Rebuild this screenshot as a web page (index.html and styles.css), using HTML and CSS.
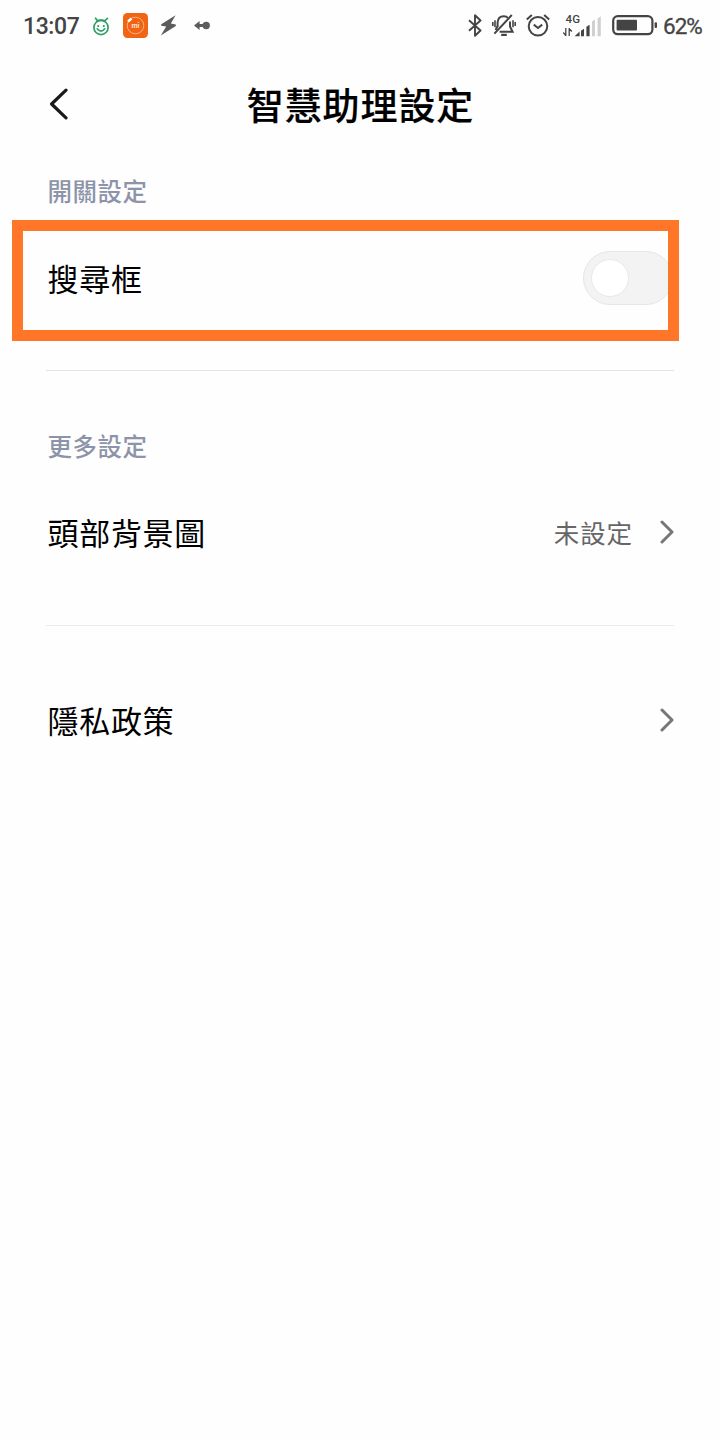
FILE: index.html
```html
<!DOCTYPE html>
<html lang="zh-Hant">
  <head>
  <meta charset="utf-8">
  <meta name="viewport" content="width=device-width, initial-scale=1">
  <title>智慧助理設定</title>
  <link rel="stylesheet" href="styles.css">
  </head>
  <body>
    <div class="status-bar">
      <div class="status-group">
        <span class="clock">13:07</span>
        <svg class="smiley" width="18" height="20" viewBox="0 0 18 20" fill="none" stroke="#2f9f68" stroke-width="1.7" stroke-linecap="round">
          <circle cx="9" cy="11.5" r="7.1"/>
          <path d="M5.4 5 3.6 2.2M12.6 5 15.4 2.4M5.2 12.8Q9 17.5 12.8 12.8M5 4.9Q9 3.2 13 4.9"/>
          <path d="M6.2 10v.1M11.8 10v.1" stroke-width="2.2"/>
        </svg>
        <svg class="mi" width="25" height="25" viewBox="0 0 25 25">
          <rect width="25" height="25" rx="4.5" fill="#f06414"/>
          <circle cx="12.5" cy="12.5" r="8.3" fill="none" stroke="#fbc6a0" stroke-width=".8"/>
          <path d="M5 8.5 8.5 5.5" stroke="#fff" stroke-width="2.4"/>
          <text x="12.5" y="14.6" text-anchor="middle" font-size="7" font-weight="bold" fill="#ffe7d6">mi</text>
        </svg>
        <svg class="bolt" width="17" height="21" viewBox="0 0 17 21" fill="#5c5c5c">
          <path d="M15.6.3 1.2 9.2v1.6l5 .8L.8 20.6 15.8 11V9.4l-5-.8z"/>
        </svg>
        <svg class="link" width="16" height="9" viewBox="0 0 16 9" fill="#5c5c5c">
          <path d="M0 4.5 5.6.1v3H10v2.8H5.6v3z"/>
          <circle cx="12.2" cy="4.5" r="3.7"/>
        </svg>
      </div>
      <div class="status-group">
        <svg class="bluetooth" width="14" height="23" viewBox="0 0 14 23" fill="none" stroke="#444" stroke-width="1.9" stroke-linejoin="round">
          <path d="M1 6.3 12.5 16.5 7 21.8V1.2l5.5 5.3L1 16.7"/>
        </svg>
        <svg class="bell" width="24" height="23" viewBox="0 0 24 23" fill="none" stroke="#444" stroke-width="2">
          <path d="M5.6 13V8.5Q6 2.2 11.8 2.2Q14.6 2.2 16 4M18 7.5V12.5L20.6 17.8H7.6M5.6 12 3.6 16"/>
          <path d="M2.4 19.6 19.8 1"/>
          <path d="M9.2 20.9h5.6" stroke-width="2.2"/>
          <path d="M3 6.3v7M.8 8v4M21 6.3v7M23.2 8v4" stroke-width="1.6"/>
        </svg>
        <svg class="alarm" width="24" height="23" viewBox="0 0 24 23" fill="none" stroke="#444" stroke-width="2">
          <circle cx="12" cy="12.3" r="9.3"/>
          <path d="M7.8 10.6 12 14 16.2 10.6M.8 5.6 5.8 1M23.2 5.6 18.2 1"/>
        </svg>
        <svg class="signal" width="39" height="30" viewBox="0 -3 39 30" fill="#444">
          <text x="2.6" y="9.3" font-size="11.5" font-weight="500">4G</text>
          <path d="M2.8 14v8M.2 18.5l2.6 3M6.2 22v-8M8.8 17.5l-2.6-3" fill="none" stroke="#444" stroke-width="1.3"/>
          <path d="M11.6 22.2 16.6 17.5v4.7zM18 22.2V16.7l3-1.9v7.4zM23.4 22.2V12.8l3.2-2v11.4z"/>
          <path d="M29 22.2V7.4l3-2v16.8zM34.6 22.2V4.4l3.2-2.2v20z" fill="#d0d0d0"/>
        </svg>
        <svg class="battery" width="46" height="21" viewBox="0 0 46 21">
          <rect x="1.2" y="1.2" width="39.2" height="18" rx="4.6" fill="none" stroke="#444" stroke-width="2.2"/>
          <rect x="4.6" y="4.8" width="20.4" height="10.8" rx="1" fill="#444"/>
          <rect x="42.6" y="7.3" width="2.4" height="5.6" rx="1" fill="#444"/>
        </svg>
        <span class="percent">62%</span>
      </div>
    </div>

    <header class="title-bar">
      <svg class="back" width="20" height="32" viewBox="0 0 20 32" fill="none" stroke="#1a1a1a" stroke-width="3.2" stroke-linecap="round" stroke-linejoin="round">
        <path d="M17 2.2 2.6 16 17 29.8"/>
      </svg>
      <h1>智慧助理設定</h1>
    </header>

    <main>
      <h2 class="section-label">開關設定</h2>
      <div class="highlight">
        <span class="name">搜尋框</span>
        <div class="toggle"><div class="knob"></div></div>
      </div>
      <hr class="switch-line">

      <h2 class="section-label more">更多設定</h2>
      <div class="row">
        <span class="name">頭部背景圖</span>
        <span class="value">未設定</span>
        <svg class="chevron" width="15" height="24" viewBox="0 0 15 24"><path d="M2 2 12 12 2 22"/></svg>
      </div>
      <hr class="more-line">

      <div class="row privacy">
        <span class="name">隱私政策</span>
        <svg class="chevron" width="15" height="24" viewBox="0 0 15 24"><path d="M2 2 12 12 2 22"/></svg>
      </div>
    </main>
  </body>
</html>
```

FILE: styles.css
```css
* {
  box-sizing: border-box;
}

body {
  margin: 0;
  min-height: 1440px;
  background: #fefefe;
  color: #000;
  font-family: "Noto Sans CJK TC", sans-serif;
}

svg {
  display: block;
  flex: none;
}

.status-bar {
  display: flex;
  justify-content: space-between;
  height: 51px;
  padding: 0 18px 0 23px;
  color: #444;
  font-family: Roboto, sans-serif;
}

.status-group {
  display: flex;
  align-items: center;
}

.clock {
  width: 69px;
  padding-top: 2px;
  font-size: 23px;
  font-weight: 500;
  letter-spacing: -0.4px;
}

.mi {
  margin-left: 13px;
}

.bolt {
  margin-left: 12px;
}

.link {
  margin-left: 17px;
}

.bell,
.alarm,
.battery {
  margin-left: 10px;
}

.signal {
  margin-left: 13px;
}

.percent {
  width: 39px;
  margin-left: 5px;
  font-size: 22.5px;
  font-weight: 400;
  letter-spacing: -1px;
  white-space: nowrap;
  -webkit-text-stroke: 0.3px #444;
}

.title-bar {
  display: grid;
  grid-template-columns: 48px 1fr 48px;
  align-items: center;
  height: 106px;
}

.title-bar h1 {
  margin: 0;
  padding-left: 1px;
  font-size: 37px;
  font-weight: 500;
  letter-spacing: 0.9px;
  line-height: 54px;
  text-align: center;
  -webkit-text-stroke: 0.2px #000;
}

.back {
  justify-self: end;
  margin-right: -21px;
}

.section-label {
  height: 63px;
  margin: 0 47.5px;
  color: #8d94a9;
  font-size: 24.5px;
  font-weight: 500;
  letter-spacing: 0.5px;
  line-height: 68px;
}

.name {
  font-size: 31px;
  letter-spacing: 0.7px;
  line-height: 44px;
}

.highlight {
  display: flex;
  align-items: center;
  justify-content: space-between;
  height: 121px;
  margin: 0 41px 0 12px;
  padding-left: 24.5px;
  padding-bottom: 6px;
  border: 11px solid #ff7629;
  overflow: hidden;
}

.toggle {
  flex: none;
  width: 90px;
  height: 54px;
  margin-right: -4.5px;
  padding: 7px;
  border: 1px solid #e6e6e6;
  border-radius: 27px;
  background: #f3f3f3;
}

.knob {
  width: 38px;
  height: 38px;
  border: 1px solid #e9e9e9;
  border-radius: 50%;
  background: #fff;
}

hr {
  height: 1px;
  margin: 0 46px;
  border: 0;
  background: #e4e4e4;
}

.switch-line {
  margin-top: 29px;
}

.more-line {
  margin-top: 37px;
  background: #ebebeb;
}

.more {
  margin-top: 41px;
}

.row {
  display: flex;
  align-items: center;
  height: 113px;
  padding: 0 45px 0 47.5px;
}

.value {
  margin-left: auto;
  margin-right: 27px;
  color: #666;
  font-size: 25.5px;
  letter-spacing: 0.9px;
}

.chevron {
  fill: none;
  stroke: #777;
  stroke-width: 3;
  stroke-linecap: round;
  stroke-linejoin: round;
}

.privacy {
  margin-top: 37px;
}

.privacy .chevron {
  margin-left: auto;
}
```
